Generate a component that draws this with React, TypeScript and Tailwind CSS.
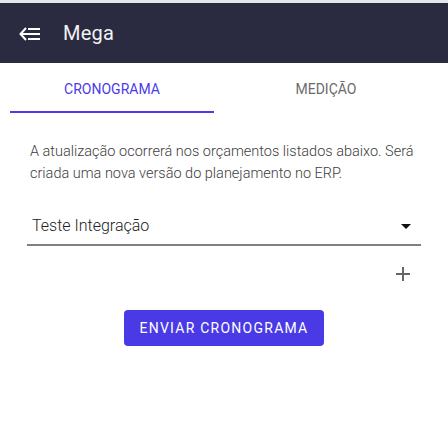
import React from "react";

export default function App() {
  return (
    <div className="w-[448px] h-[435px] bg-white flex flex-col font-[Roboto,'Liberation_Sans',sans-serif]">
      <div className="h-[3px] bg-[#e6e6e6]" />
      <div className="h-[60px] bg-[#2a2b40] flex items-center pl-[19px]">
        <svg width="22" height="14" viewBox="0 0 22 14" className="mt-[2px]">
          <path d="M7 1 L1.5 7 L7 13" stroke="#fff" strokeWidth="2" fill="none" />
          <path d="M9 2 H21 M2 7 H21 M9 12 H21" stroke="#fff" strokeWidth="2" fill="none" />
        </svg>
        <span className="ml-[22px] text-[20px] font-[450] text-[#f2f2f2] tracking-[0.2px]">Mega</span>
      </div>
      <div className="flex h-[50px] px-[10px]">
        <div className="w-[204px] flex flex-col items-center justify-between">
          <span className="mt-[16px] text-[14px] font-[420] text-[#4b3bea]">CRONOGRAMA</span>
          <div className="h-[2px] w-full bg-[#4b3bea]" />
        </div>
        <div className="flex-1 flex justify-center">
          <span className="mt-[16px] text-[14px] font-[420] text-[#6b6b6b]">MEDIÇÃO</span>
        </div>
      </div>
      <div className="px-[30px] mt-[28px] text-[14.5px] leading-[22px] font-[340] text-[#404040]">
        A atualização ocorrerá nos orçamentos listados abaixo. Será criada uma nova versão do planejamento no ERP.
      </div>
      <div className="mx-[27px] mt-[30px] border-b-2 border-[#808080] h-[31px] flex items-start justify-between pl-[5px] pr-[10px]">
        <span className="text-[16px] font-[340] text-[#222] leading-[20px] mt-[1px]">Teste Integração</span>
        <svg width="10" height="6" viewBox="0 0 10 6" className="mt-[9px]">
          <path d="M0 0 H10 L5 5 Z" fill="#111" />
        </svg>
      </div>
      <div className="flex justify-end pr-[37px] mt-[20px]">
        <svg width="16" height="16" viewBox="0 0 16 16">
          <path d="M8 1 V15 M1 8 H15" stroke="#666" strokeWidth="2" />
        </svg>
      </div>
      <div className="flex justify-center mt-[28px]">
        <button className="w-[200px] h-[36px] rounded-[4px] bg-[#4a3ae5] text-white text-[14px] font-[420] tracking-[1.25px]">
          ENVIAR CRONOGRAMA
        </button>
      </div>
    </div>
  );
}
